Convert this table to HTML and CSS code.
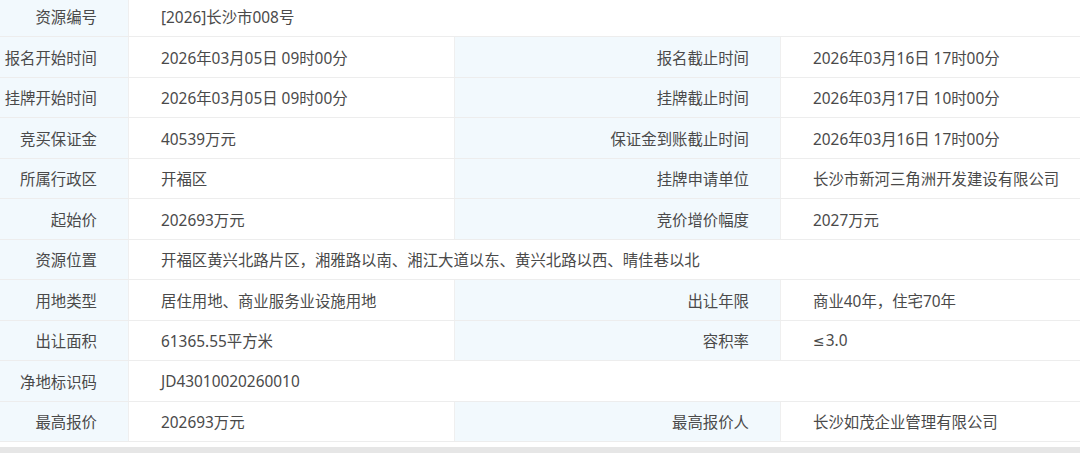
FILE: index.html
```html
<!DOCTYPE html>
<html lang="zh-CN">
<head>
<meta charset="utf-8">
<title>资源信息</title>
<link rel="stylesheet" href="styles.css">
</head>
<body>
<div class="table">
  <div class="row first">
    <div class="lbl">资源编号</div>
    <div class="val span3">[2026]长沙市008号</div>
  </div>
  <div class="row">
    <div class="lbl">报名开始时间</div>
    <div class="val">2026年03月05日 09时00分</div>
    <div class="lbl">报名截止时间</div>
    <div class="val">2026年03月16日 17时00分</div>
  </div>
  <div class="row">
    <div class="lbl">挂牌开始时间</div>
    <div class="val">2026年03月05日 09时00分</div>
    <div class="lbl">挂牌截止时间</div>
    <div class="val">2026年03月17日 10时00分</div>
  </div>
  <div class="row">
    <div class="lbl">竞买保证金</div>
    <div class="val">40539万元</div>
    <div class="lbl">保证金到账截止时间</div>
    <div class="val">2026年03月16日 17时00分</div>
  </div>
  <div class="row">
    <div class="lbl">所属行政区</div>
    <div class="val">开福区</div>
    <div class="lbl">挂牌申请单位</div>
    <div class="val">长沙市新河三角洲开发建设有限公司</div>
  </div>
  <div class="row">
    <div class="lbl">起始价</div>
    <div class="val">202693万元</div>
    <div class="lbl">竞价增价幅度</div>
    <div class="val">2027万元</div>
  </div>
  <div class="row">
    <div class="lbl">资源位置</div>
    <div class="val span3">开福区黄兴北路片区，湘雅路以南、湘江大道以东、黄兴北路以西、晴佳巷以北</div>
  </div>
  <div class="row">
    <div class="lbl">用地类型</div>
    <div class="val">居住用地、商业服务业设施用地</div>
    <div class="lbl">出让年限</div>
    <div class="val">商业40年，住宅70年</div>
  </div>
  <div class="row">
    <div class="lbl">出让面积</div>
    <div class="val">61365.55平方米</div>
    <div class="lbl">容积率</div>
    <div class="val"><span class="sym">≤</span>3.0</div>
  </div>
  <div class="row">
    <div class="lbl">净地标识码</div>
    <div class="val span3">JD43010020260010</div>
  </div>
  <div class="row last">
    <div class="lbl">最高报价</div>
    <div class="val">202693万元</div>
    <div class="lbl">最高报价人</div>
    <div class="val">长沙如茂企业管理有限公司</div>
  </div>
</div>
<div class="footer"></div>
</body>
</html>
```
FILE: styles.css
```css
html, body {
  margin: 0;
  padding: 0;
  background: #ffffff;
}
body {
  font-family: "Noto Sans", "Noto Sans CJK SC", sans-serif;
  font-size: 15.4px;
  color: #4a4a4a;
  width: 1080px;
  height: 453px;
  overflow: hidden;
  display: flex;
  flex-direction: column;
}
.table {
  display: flex;
  flex-direction: column;
}
.row {
  display: grid;
  grid-template-columns: 129px 326px 326px 299px;
  height: 41px;
  border-bottom: 1px solid #ededed;
  box-sizing: border-box;
}
.row:nth-child(odd) { height: 40px; }
.row.first { height: 37px; }
.row.first .lbl, .row.first .val { padding-bottom: 3px; }
.lbl, .val {
  display: flex;
  align-items: center;
  white-space: nowrap;
  border-right: 1px solid #efefef;
  box-sizing: border-box;
}
.lbl {
  background: #f2f9fd;
  justify-content: flex-end;
  padding-right: 31px;
}
.val {
  padding-left: 32px;
}
.val:last-child { border-right: none; }
.span3 { grid-column: 2 / 5; }
.sym {
  font-family: "DejaVu Sans", sans-serif;
  font-size: 14px;
  margin-right: 1px;
}
.footer {
  flex: 1;
  margin-top: 5px;
  background: #e6e6e6;
}
```
